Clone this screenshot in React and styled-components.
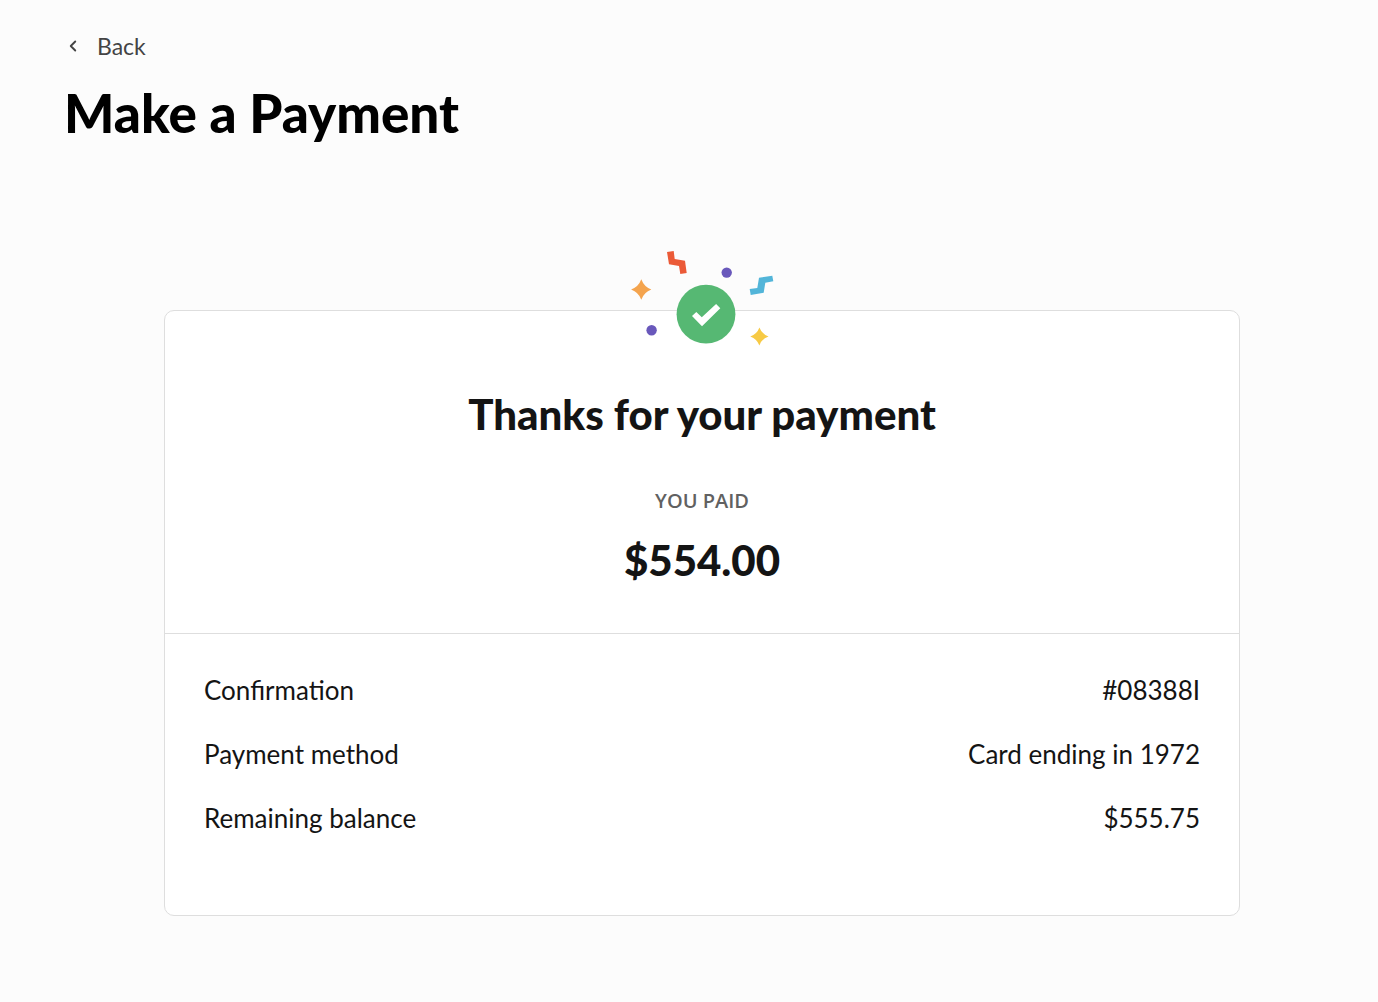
import React from 'react';
import styled, { createGlobalStyle } from 'styled-components';
import { ChevronLeft } from 'lucide-react';

const GlobalStyle = createGlobalStyle`
  * {
    box-sizing: border-box;
  }

  body {
    margin: 0;
    background: #fcfcfc;
    color: #141414;
    font-family: Lato, sans-serif;
  }
`;

const Page = styled.main`
  padding: 30px 38px 86px 64px;
`;

const BackLink = styled.a`
  display: inline-flex;
  align-items: center;
  gap: 15px;
  color: #444;
  font-size: 23px;
  line-height: 32px;
  text-decoration: none;
`;

const PageTitle = styled.h1`
  margin: 20px 0 0;
  color: #000;
  font-size: 53px;
  font-weight: 900;
  line-height: 62px;
`;

const Card = styled.section`
  position: relative;
  margin: 166px 100px 0;
  border: 1px solid #dedede;
  border-radius: 10px;
  background: #fff;
`;

const Celebration = styled.svg`
  position: absolute;
  top: -61px;
  left: 50%;
  width: 144px;
  height: 96px;
  transform: translateX(-50%);
`;

const Summary = styled.div`
  padding: 75px 40px 44px;
  border-bottom: 1px solid #dedede;
  text-align: center;
`;

const Heading = styled.h2`
  margin: 0;
  font-size: 42px;
  font-weight: 900;
  line-height: 56px;
`;

const Label = styled.p`
  margin: 45px 0 16px;
  color: #616161;
  font-family: 'Open Sans', sans-serif;
  font-size: 20px;
  font-weight: 600;
  line-height: 28px;
  text-transform: uppercase;
`;

const Amount = styled.p`
  margin: 0;
  font-size: 42px;
  font-weight: 900;
  line-height: 58px;
`;

const Details = styled.dl`
  display: grid;
  gap: 32px;
  margin: 0;
  padding: 40px 39px 81px;
`;

const Row = styled.div`
  display: flex;
  justify-content: space-between;
  font-size: 26px;
  line-height: 32px;
`;

const Term = styled.dt``;

const Value = styled.dd`
  margin: 0;
`;

const details = [
  { term: 'Confirmation', value: '#08388I' },
  { term: 'Payment method', value: 'Card ending in 1972' },
  { term: 'Remaining balance', value: '$555.75' },
];

const Confetti = () => {
  return (
    <Celebration viewBox="0 0 144 96" aria-hidden="true">
      <path fill="#eb5a37" d="M37 2 43.7 1 44.7 9 55 10.7 56.7 23 50.3 24 49 16 39 14.3Z" />
      <path
        fill="#52b5d9"
        d="M119.7 39 127.3 38 129 27.7 142.3 25.7 143.3 31.3 135.3 32.7 133.7 42.7 120.7 45Z"
      />
      <path fill="#f4a44e" d="M11.3 29.3Q14 36.8 21.3 39.5 14 42.2 11.3 49.7 8.6 42.2 1.1 39.5 8.6 36.8 11.3 29.3Z" />
      <path fill="#f7ca45" d="M129.4 77.4Q131.8 84 138.5 86.4 131.8 88.8 129.4 95.4 127 88.8 120.3 86.4 127 84 129.4 77.4Z" />
      <circle fill="#6958bb" cx="96.7" cy="22.6" r="5.2" />
      <circle fill="#6958bb" cx="21.6" cy="80.2" r="5.2" />
      <circle fill="#56b873" cx="76" cy="64.2" r="29.4" />
      <path fill="#fff" d="M62 66.1 66.3 62 71.8 67.2 86.1 54 90.3 58.3 72 76.3Z" />
    </Celebration>
  );
};

const App = () => {
  return (
    <Page>
      <GlobalStyle />
      <BackLink href="#">
        <ChevronLeft size={18} strokeWidth={2.5} />
        Back
      </BackLink>
      <PageTitle>Make a Payment</PageTitle>
      <Card>
        <Confetti />
        <Summary>
          <Heading>Thanks for your payment</Heading>
          <Label>You paid</Label>
          <Amount>$554.00</Amount>
        </Summary>
        <Details>
          {details.map(({ term, value }) => (
            <Row key={term}>
              <Term>{term}</Term>
              <Value>{value}</Value>
            </Row>
          ))}
        </Details>
      </Card>
    </Page>
  );
};

export default App;
